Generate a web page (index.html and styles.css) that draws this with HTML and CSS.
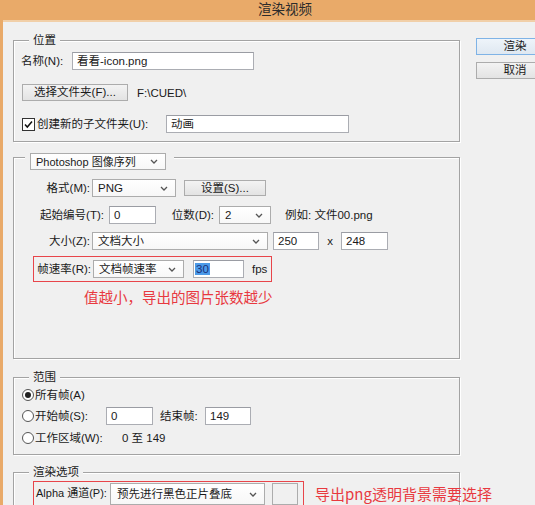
FILE: index.html
```html
<!DOCTYPE html>
<html lang="zh-CN">
<head>
<meta charset="utf-8">
<title>渲染视频</title>
<link rel="stylesheet" href="styles.css">
</head>
<body>
<div class="titlebar"><span class="title">渲染视频</span></div>
<div class="strip"></div>
<div class="window">
  <div class="main">
    <section class="group g1">
      <div class="legend">位置</div>
      <div class="row r-name">
        <span class="lbl w-name">名称(N):</span>
        <div class="input w-nameinput">看看-icon.png</div>
      </div>
      <div class="row r-folder">
        <div class="btn w-folder">选择文件夹(F)...</div>
        <span class="path">F:\CUED\</span>
      </div>
      <div class="row r-sub">
        <span class="check"><svg viewBox="0 0 11 11"><path d="M2 5.5l2.3 2.5 4.7-5.5" fill="none" stroke="#111" stroke-width="1.5"/></svg></span>
        <span class="lbl w-sub">创建新的子文件夹(U):</span>
        <div class="input w-subinput">动画</div>
      </div>
    </section>

    <section class="group g2">
      <div class="legend legend-select">
        <div class="select w-seq">Photoshop 图像序列<svg class="chev" viewBox="0 0 8 5"><path d="M1 1l3 3 3-3" fill="none" stroke="#555" stroke-width="1.3"/></svg></div>
      </div>
      <div class="row r-fmt">
        <span class="lbl ra w-fmt">格式(M):</span>
        <div class="select w-png">PNG<svg class="chev" viewBox="0 0 8 5"><path d="M1 1l3 3 3-3" fill="none" stroke="#555" stroke-width="1.3"/></svg></div>
        <div class="btn w-set">设置(S)...</div>
      </div>
      <div class="row r-start">
        <span class="lbl ra w-start">起始编号(T):</span>
        <div class="input w-startinput">0</div>
        <span class="lbl ra w-digits">位数(D):</span>
        <div class="select w-two">2<svg class="chev" viewBox="0 0 8 5"><path d="M1 1l3 3 3-3" fill="none" stroke="#555" stroke-width="1.3"/></svg></div>
        <span class="example">例如: 文件00.png</span>
      </div>
      <div class="row r-size">
        <span class="lbl ra w-fmt">大小(Z):</span>
        <div class="select w-docsize">文档大小<svg class="chev" viewBox="0 0 8 5"><path d="M1 1l3 3 3-3" fill="none" stroke="#555" stroke-width="1.3"/></svg></div>
        <div class="input w-dim first">250</div>
        <span class="times">x</span>
        <div class="input w-dim">248</div>
      </div>
      <div class="row r-fps">
        <div class="redbox fpsbox">
          <span class="lbl ra w-fpslbl">帧速率(R):</span>
          <div class="select w-docfps">文档帧速率<svg class="chev" viewBox="0 0 8 5"><path d="M1 1l3 3 3-3" fill="none" stroke="#555" stroke-width="1.3"/></svg></div>
          <div class="input w-fps"><span class="sel">30</span></div>
          <span class="fps">fps</span>
        </div>
      </div>
      <p class="note note1">值越小，导出的图片张数越少</p>
    </section>

    <section class="group g3">
      <div class="legend">范围</div>
      <div class="row r-all">
        <span class="radio on"></span>
        <span class="lbl">所有帧(A)</span>
      </div>
      <div class="row r-from">
        <span class="radio"></span>
        <span class="lbl w-from">开始帧(S):</span>
        <div class="input w-frame">0</div>
        <span class="lbl w-end">结束帧:</span>
        <div class="input w-frame2">149</div>
      </div>
      <div class="row r-work">
        <span class="radio"></span>
        <span class="lbl w-work">工作区域(W):</span>
        <span class="range">0 至 149</span>
      </div>
    </section>

    <section class="group g4">
      <div class="legend">渲染选项</div>
      <div class="row r-alpha">
        <div class="redbox alphabox">
          <span class="lbl w-alpha">Alpha 通道(P):</span>
          <div class="select w-alphasel">预先进行黑色正片叠底<svg class="chev" viewBox="0 0 8 5"><path d="M1 1l3 3 3-3" fill="none" stroke="#555" stroke-width="1.3"/></svg></div>
          <div class="swatch"></div>
        </div>
        <p class="note note2">导出png透明背景需要选择</p>
      </div>
    </section>
  </div>
  <div class="side">
    <div class="btn side-btn default">渲染</div>
    <div class="btn side-btn cancel">取消</div>
  </div>
</div>
</body>
</html>
```

FILE: styles.css
```css
* { box-sizing: border-box; }
html, body { margin: 0; padding: 0; }
body {
  width: 535px;
  height: 505px;
  overflow: hidden;
  background: #f0f0f0;
  font-family: "Liberation Sans", "Noto Sans CJK SC", sans-serif;
  font-size: 11.5px;
  line-height: 16px;
  color: #1a1a1a;
}

.titlebar {
  height: 20px;
  background: #e9aa69;
  padding-left: 258px;
}
.title {
  font-size: 13.5px;
  line-height: 20px;
  color: #2b2b2b;
}
.strip {
  height: 2px;
  background: #f1cfa8;
  border-left: 3px solid #e9aa69;
}

.window {
  display: flex;
  align-items: flex-start;
  border-left: 3px solid #e9aa69;
  padding-left: 10px;
  height: 483px;
  overflow: hidden;
}
.main {
  width: 447px;
  flex: none;
}

.group {
  border: 1px solid #a3a3a3;
  box-shadow: inset 1px 1px 0 #fff, 1px 1px 0 #fff;
}
.legend {
  width: fit-content;
  margin: -9px 0 0 15px;
  padding: 0 4px;
  background: #f0f0f0;
  line-height: 16px;
  position: relative;
  font-size: 11.5px;
}
.legend-select {
  display: flex;
  margin: -5px 0 0 11px;
  padding: 0 8px 0 5px;
  font-size: 11px;
}

.row {
  display: flex;
  align-items: center;
  white-space: nowrap;
}
.lbl { flex: none; }
.ra { text-align: right; }

.input {
  flex: none;
  height: 18px;
  border: 1px solid #abadb3;
  border-top-color: #9a9ca3;
  background: #fff;
  padding-left: 4px;
  line-height: 16px;
  overflow: hidden;
}
.select {
  flex: none;
  display: flex;
  align-items: center;
  height: 18px;
  border: 1px solid #acacac;
  background: linear-gradient(#ffffff, #f7f7f7);
  padding-left: 5px;
  line-height: 16px;
}
.chev {
  width: 8px;
  height: 5px;
  margin-left: auto;
  margin-right: 7px;
  flex: none;
}
.btn {
  flex: none;
  height: 17px;
  border: 1px solid #acacac;
  background: linear-gradient(#f3f3f3, #e3e3e3);
  text-align: center;
  line-height: 15px;
}

.check {
  flex: none;
  width: 13px;
  height: 13px;
  border: 1px solid #333;
  background: #fff;
  display: flex;
  align-items: center;
  justify-content: center;
}
.check svg { width: 11px; height: 11px; }
.radio {
  flex: none;
  width: 12px;
  height: 12px;
  border: 1px solid #555;
  border-radius: 50%;
  background: #fff;
  display: flex;
  align-items: center;
  justify-content: center;
}
.radio.on::after {
  content: "";
  width: 6px;
  height: 6px;
  border-radius: 50%;
  background: #222;
}

.redbox {
  display: flex;
  align-items: center;
  border: 1px solid #e8454a;
  flex: none;
}
.note {
  margin: 0;
  color: #e8393f;
  white-space: nowrap;
  font-family: "Noto Sans CJK SC", sans-serif;
}

/* group 1 */
.g1 { margin-top: 18px; padding-bottom: 8px; }
.r-name { margin-top: 4px; height: 18px; padding-left: 7px; }
.w-name { width: 51px; }
.w-nameinput { width: 182px; }
.r-folder { margin-top: 14px; height: 17px; padding-left: 8px; }
.w-folder { width: 106px; }
.path { margin-left: 9px; }
.r-sub { margin-top: 14px; height: 18px; padding-left: 8px; }
.w-sub { width: 131px; padding-left: 2px; }
.w-subinput { width: 183px; }

/* group 2 */
.g2 { margin-top: 15px; padding-bottom: 51px; }
.w-seq { width: 136px; height: 17px; }
.r-fmt { margin-top: 9px; height: 18px; }
.w-fmt { width: 76px; }
.w-png { width: 84px; margin-left: 2px; }
.w-set { width: 82px; height: 16px; margin-left: 8px; line-height: 14px; }
.r-start { margin-top: 9px; height: 18px; }
.w-start { width: 90px; }
.w-startinput { width: 47px; margin-left: 5px; }
.w-digits { width: 58px; }
.w-two { width: 52px; margin-left: 5px; }
.example { margin-left: 14px; }
.r-size { margin-top: 8px; height: 18px; }
.w-docsize { width: 176px; margin-left: 2px; }
.w-dim { width: 47px; }
.w-dim.first { width: 46px; margin-left: 5px; }
.times { width: 22px; text-align: center; }
.r-fps { margin-top: 6px; height: 26px; }
.fpsbox { margin-left: 19px; width: 239px; height: 26px; padding: 0 2px; }
.w-fpslbl { width: 55px; }
.w-docfps { width: 91px; margin-left: 2px; }
.w-fps { width: 51px; margin-left: 9px; padding-left: 1px; }
.sel { background: #4b9ae8; color: #1b2f78; padding: 0 1px; }
.fps { margin-left: 8px; }
.note1 { margin-top: 5px; margin-left: 70px; font-size: 14.5px; line-height: 20px; }

/* group 3 */
.g3 { margin-top: 18px; padding-bottom: 8px; }
.r-all { margin-top: 2px; height: 16px; padding-left: 8px; }
.r-all .lbl { margin-left: 1px; }
.r-from { margin-top: 4px; height: 18px; padding-left: 8px; }
.w-from { width: 72px; padding-left: 1px; }
.w-frame { width: 47px; }
.w-end { width: 52px; padding-left: 7px; }
.w-frame2 { width: 46px; }
.r-work { margin-top: 5px; height: 16px; padding-left: 8px; }
.w-work { width: 88px; padding-left: 1px; }

/* group 4 */
.g4 { margin-top: 17px; height: 50px; }
.r-alpha { margin-top: 1px; align-items: flex-start; }
.alphabox { margin-left: 19px; width: 271px; height: 26px; padding: 1px 2px 0; align-items: flex-start; }
.w-alpha { width: 71px; line-height: 21px; font-size: 11px; }
.w-alphasel { width: 155px; height: 22px; margin-left: 3px; padding-left: 6px; }
.swatch { width: 26px; height: 22px; margin-left: 7px; border: 1px solid #acacac; background: #f0f0f0; }
.note2 { margin-left: 11px; font-size: 15px; line-height: 24px; margin-top: 1px; }

/* side buttons */
.side { margin-left: 16px; margin-top: 16px; flex: none; }
.side-btn { width: 78px; height: 17px; }
.default { border-color: #7fb3e6; background: linear-gradient(#eef4fa, #dfe8f1); }
.cancel { margin-top: 7px; }
```
